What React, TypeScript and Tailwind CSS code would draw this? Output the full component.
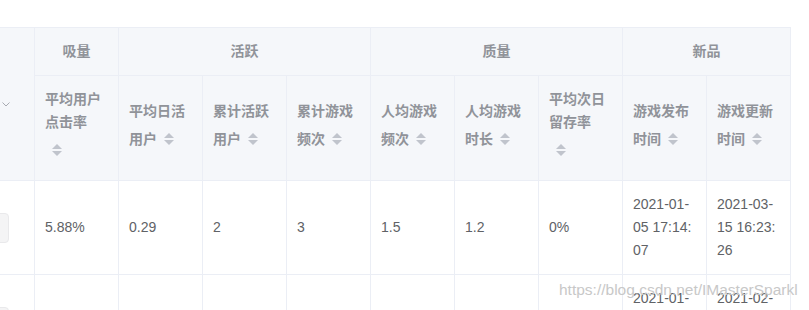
import React from "react";

const B = "border-r border-b border-[#ebeef5]";

const sortHeaders = [
  "平均用户点击率",
  "平均日活用户",
  "累计活跃用户",
  "累计游戏频次",
  "人均游戏频次",
  "人均游戏时长",
  "平均次日留存率",
  "游戏发布时间",
  "游戏更新时间",
];

type Cell = string | string[];

const rows: Cell[][] = [
  ["5.88%", "0.29", "2", "3", "1.5", "1.2", "0%", ["2021-01-", "05 17:14:", "07"], ["2021-03-", "15 16:23:", "26"]],
  ["3.45%", "0.14", "1", "2", "2", "0.8", "0%", ["2021-01-", "12 10:21:", "33"], ["2021-02-", "20 09:48:", "15"]],
];

function Caret() {
  return (
    <span className="relative inline-flex h-[34px] w-[24px] align-middle">
      <span className="absolute left-[7px] top-[5px] h-0 w-0 border-[5px] border-transparent border-b-[#c0c4cc]" />
      <span className="absolute left-[7px] bottom-[7px] h-0 w-0 border-[5px] border-transparent border-t-[#c0c4cc]" />
    </span>
  );
}

function LeftData() {
  return (
    <div className={`${B} flex items-center justify-end overflow-hidden bg-white pr-[25px]`}>
      <div className="flex h-[30px] w-[56px] shrink-0 items-center justify-center rounded-[4px] border border-[#e9e9eb] bg-[#f4f4f5] text-[12px] text-[#909399]">
        查看
      </div>
    </div>
  );
}

export default function App() {
  return (
    <div className="relative h-[310px] w-[809px] overflow-hidden bg-white font-['Liberation_Sans','Noto_Sans_CJK_SC',sans-serif] text-[14px]">
      <div className="mt-[27px] grid w-[791px] grid-cols-[35px_repeat(9,84px)] grid-rows-[48px_105px_94px_94px] border-t border-[#ebeef5]">
        {/* left rowspan header */}
        <div className={`${B} row-span-2 flex items-center justify-end overflow-hidden bg-[#f5f7fa] pr-[24px]`}>
          <span className="shrink-0 whitespace-nowrap font-bold leading-[23px] text-[#909399]">游戏类型</span>
          <svg className="ml-[2px] shrink-0" width="8" height="5" viewBox="0 0 8 5" fill="none">
            <path d="M0.5 0.5 L4 4 L7.5 0.5" stroke="#a8abb2" strokeWidth="1" />
          </svg>
        </div>
        <div className={`${B} flex items-center justify-center bg-[#f5f7fa] font-bold leading-[23px] text-[#909399]`}>吸量</div>
        <div className={`${B} col-span-3 flex items-center justify-center bg-[#f5f7fa] font-bold leading-[23px] text-[#909399]`}>活跃</div>
        <div className={`${B} col-span-3 flex items-center justify-center bg-[#f5f7fa] font-bold leading-[23px] text-[#909399]`}>质量</div>
        <div className={`${B} col-span-2 flex items-center justify-center bg-[#f5f7fa] font-bold leading-[23px] text-[#909399]`}>新品</div>

        {sortHeaders.map((h) => (
          <div key={h} className={`${B} flex items-center bg-[#f5f7fa] px-[10px]`}>
            <div className="break-all font-bold leading-[23px] text-[#909399]">
              {h}
              <Caret />
            </div>
          </div>
        ))}

        {rows.map((r, ri) => (
          <React.Fragment key={ri}>
            <LeftData />
            {r.map((c, ci) => (
              <div key={ci} className={`${B} flex items-center bg-white px-[10px] leading-[23px] text-[#606266]`}>
                {Array.isArray(c) ? (
                  <div>
                    {c.map((l, li) => (
                      <div key={li} className="whitespace-pre">{l}</div>
                    ))}
                  </div>
                ) : (
                  <div>{c}</div>
                )}
              </div>
            ))}
          </React.Fragment>
        ))}
      </div>

      <div className="pointer-events-none absolute left-[559px] top-[281px] whitespace-nowrap font-['Liberation_Sans',sans-serif] text-[15.5px] leading-[18px] text-[#c8c8c8]">
        https://blog.csdn.net/IMasterSparkl
      </div>
    </div>
  );
}
